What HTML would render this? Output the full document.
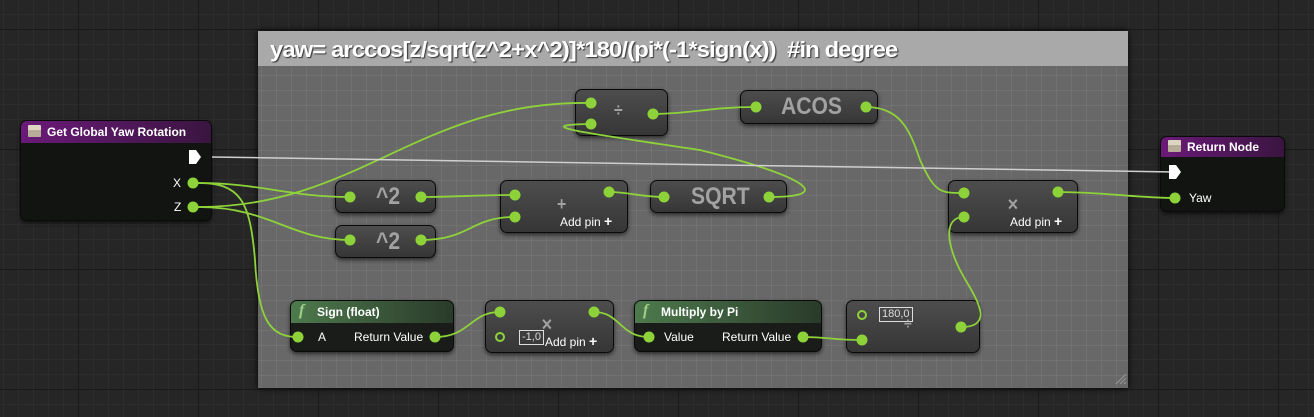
<!DOCTYPE html>
<html><head><meta charset="utf-8"><style>
*{margin:0;padding:0;box-sizing:border-box}
body{width:1314px;height:417px;overflow:hidden;position:relative;font-family:"Liberation Sans",sans-serif;
background-color:#262626;
background-image:linear-gradient(#1a1a1a 1px,transparent 1px),linear-gradient(90deg,#1a1a1a 1px,transparent 1px),linear-gradient(#2d2d2d 1px,transparent 1px),linear-gradient(90deg,#2d2d2d 1px,transparent 1px);
background-size:120px 120px,120px 120px,15px 15px,15px 15px;background-position:78px 29px,78px 29px,3px 14px,3px 14px}
.cm{position:absolute;left:258px;top:31px;width:870px;height:357px;background-color:#686868;
background-image:linear-gradient(rgba(255,255,255,.06) 1px,transparent 1px),linear-gradient(90deg,rgba(255,255,255,.06) 1px,transparent 1px);background-size:15px 15px;background-position:3px 14px;box-shadow:0 0 6px #000}
.cmh{position:absolute;left:0;top:0;width:100%;height:35px;background:#a9a9a9;}
.cmt{position:absolute;left:12px;top:6px;color:#fff;font-size:22px;font-weight:bold;text-shadow:1px 1px 1px #333;letter-spacing:-0.8px;white-space:nowrap;transform:scaleX(1.08);transform-origin:left}
.n{position:absolute;border:1px solid #0a0a0a;border-radius:7px;background:linear-gradient(#4d4d4d,#363636);box-shadow:0 2px 4px rgba(0,0,0,.6)}
.d{background:#121412;}
.hd{height:22px;border-radius:6px 6px 0 0;color:#fff;font-size:12px;font-weight:bold;padding:4px 0 0 26px;position:relative}
.pu{background:linear-gradient(90deg,#6a1a78,#3a1540)}
.gr{background:linear-gradient(90deg,#4d7a4d,#2a3a2a)}
.ic{position:absolute;left:7px;top:4px;width:13px;height:12px;background:linear-gradient(#ddd5c0 45%,#8c8270 45%,#b8ad98 55%);border-radius:1px}
.fi{position:absolute;left:8px;top:1px;color:#9ed08a;font-style:italic;font-family:"Liberation Serif",serif;font-size:16px}
.t{position:absolute;color:#fff;font-size:12px}
.big{position:absolute;color:#a2a2a2;font-weight:bold;font-size:24px;transform:scaleX(0.88);transform-origin:left}
.box{position:absolute;border:1px solid #ddd;color:#ddd;font-size:11px;padding:0 2px;height:15px;line-height:13px}
svg{position:absolute;left:0;top:0}
</style></head><body>
<div class="cm"><div class="cmh"><div class="cmt">yaw= arccos[z/sqrt(z^2+x^2)]*180/(pi*(-1*sign(x))&nbsp; #in degree</div></div></div>

<div class="n d" style="left:20px;top:120px;width:192px;height:101px"><div class="hd pu"><div class="ic"></div>Get Global Yaw Rotation</div></div>
<div class="t" style="left:173px;top:176px">X</div><div class="t" style="left:174px;top:200px">Z</div>
<div class="n d" style="left:1160px;top:136px;width:125px;height:76px"><div class="hd pu" style="height:20px;padding-top:3px"><div class="ic" style="top:3px"></div>Return Node</div></div>
<div class="t" style="left:1189px;top:191px">Yaw</div>

<div class="n" style="left:575px;top:89px;width:93px;height:47px"></div><div class="big" style="left:614px;top:100px;font-size:18px">÷</div>
<div class="n" style="left:740px;top:90px;width:138px;height:34px"></div><div class="big" style="left:781px;top:93px">ACOS</div>
<div class="n" style="left:335px;top:180px;width:101px;height:33px"></div><div class="big" style="left:376px;top:183px">^2</div>
<div class="n" style="left:335px;top:225px;width:101px;height:33px"></div><div class="big" style="left:376px;top:228px">^2</div>
<div class="n" style="left:500px;top:180px;width:128px;height:53px"></div><div class="big" style="left:557px;top:194px;font-size:18px">+</div><div class="t" style="left:560px;top:215px">Add pin <b style="font-size:14px;line-height:10px">+</b></div>
<div class="n" style="left:650px;top:180px;width:137px;height:33px"></div><div class="big" style="left:691px;top:183px">SQRT</div>
<div class="n" style="left:948px;top:180px;width:130px;height:53px"></div><div class="big" style="left:1007px;top:195px;font-size:16px">✕</div><div class="t" style="left:1010px;top:215px">Add pin <b style="font-size:14px;line-height:10px">+</b></div>

<div class="n d" style="left:290px;top:300px;width:164px;height:52px;background:#1a1c1a"><div class="hd gr"><span class="fi">f</span>Sign (float)</div></div>
<div class="t" style="left:318px;top:330px">A</div><div class="t" style="left:354px;top:330px">Return Value</div>
<div class="n" style="left:485px;top:300px;width:129px;height:53px"></div><div class="big" style="left:541px;top:315px;font-size:16px">✕</div><div class="box" style="left:519px;top:330px">-1,0</div><div class="t" style="left:545px;top:335px">Add pin <b style="font-size:14px;line-height:10px">+</b></div>
<div class="n d" style="left:634px;top:300px;width:188px;height:52px;background:#1a1c1a"><div class="hd gr"><span class="fi">f</span>Multiply by Pi</div></div>
<div class="t" style="left:664px;top:330px">Value</div><div class="t" style="left:722px;top:330px">Return Value</div>
<div class="n" style="left:846px;top:300px;width:134px;height:53px"></div><div class="box" style="left:879px;top:307px">180,0</div><div class="big" style="left:904px;top:316px;font-size:16px">÷</div>

<svg width="1314" height="417" viewBox="0 0 1314 417">
<g fill="none" stroke="#8ed23a" stroke-width="1.8">
<path d="M198 183 C260 183,290 197,350 197"/>
<path d="M198 183 C240 183,250 200,255 260 C258 320,270 337,298 337"/>
<path d="M198 207 C360 207,420 100,591 103"/>
<path d="M198 207 C270 207,290 240,350 240"/>
<path d="M421 197 C460 197,470 195,515 195"/>
<path d="M421 240 C470 240,470 217,515 217"/>
<path d="M609 192 C630 192,640 197,664 197"/>
<path d="M769 197 C840 197,800 175,700 150 C600 135,520 125,591 124"/>
<path d="M653 114 C690 114,710 107,756 107"/>
<path d="M866 107 C900 107,910 130,920 160 C935 193,940 193,964 193"/>
<path d="M1058 192 C1100 192,1140 198,1175 198"/>
<path d="M435 337 C470 337,470 312,500 312"/>
<path d="M594 312 C620 312,620 337,649 337"/>
<path d="M803 337 C830 337,830 340,862 340"/>
<path d="M961 327 C1000 327,970 290,960 270 C945 240,945 217,964 217"/>
</g>
<path d="M212 157 L1175 172" stroke="#cfcfcf" stroke-width="1.5"/>
<g fill="#fff"><path d="M189 150h7l5 7-5 7h-7z"/><path d="M1169 165h7l5 7-5 7h-7z"/></g>
<g fill="#8ed23a">
<circle cx="193" cy="183" r="5.5"/><circle cx="193" cy="207" r="5.5"/><circle cx="1175" cy="198" r="5.5"/>
<circle cx="591" cy="103" r="5.5"/><circle cx="591" cy="124" r="5.5"/><circle cx="653" cy="114" r="5.5"/>
<circle cx="756" cy="107" r="5.5"/><circle cx="866" cy="107" r="5.5"/>
<circle cx="350" cy="197" r="5.5"/><circle cx="421" cy="197" r="5.5"/><circle cx="350" cy="240" r="5.5"/><circle cx="421" cy="240" r="5.5"/>
<circle cx="515" cy="195" r="5.5"/><circle cx="515" cy="217" r="5.5"/><circle cx="609" cy="192" r="5.5"/>
<circle cx="664" cy="197" r="5.5"/><circle cx="769" cy="197" r="5.5"/>
<circle cx="964" cy="193" r="5.5"/><circle cx="964" cy="217" r="5.5"/><circle cx="1058" cy="192" r="5.5"/>
<circle cx="298" cy="337" r="5.5"/><circle cx="435" cy="337" r="5.5"/>
<circle cx="500" cy="312" r="5.5"/><circle cx="594" cy="312" r="5.5"/>
<circle cx="649" cy="337" r="5.5"/><circle cx="803" cy="337" r="5.5"/>
<circle cx="862" cy="340" r="5.5"/><circle cx="961" cy="327" r="5.5"/>
</g>
<g fill="none" stroke="#8ed23a" stroke-width="2"><circle cx="500" cy="337" r="4"/><circle cx="862" cy="315" r="4"/></g>
<g stroke="#999" stroke-width="1"><path d="M1116 384l10-10M1120 384l6-6M1124 384l2-2"/></g>
</svg>
</body></html>
